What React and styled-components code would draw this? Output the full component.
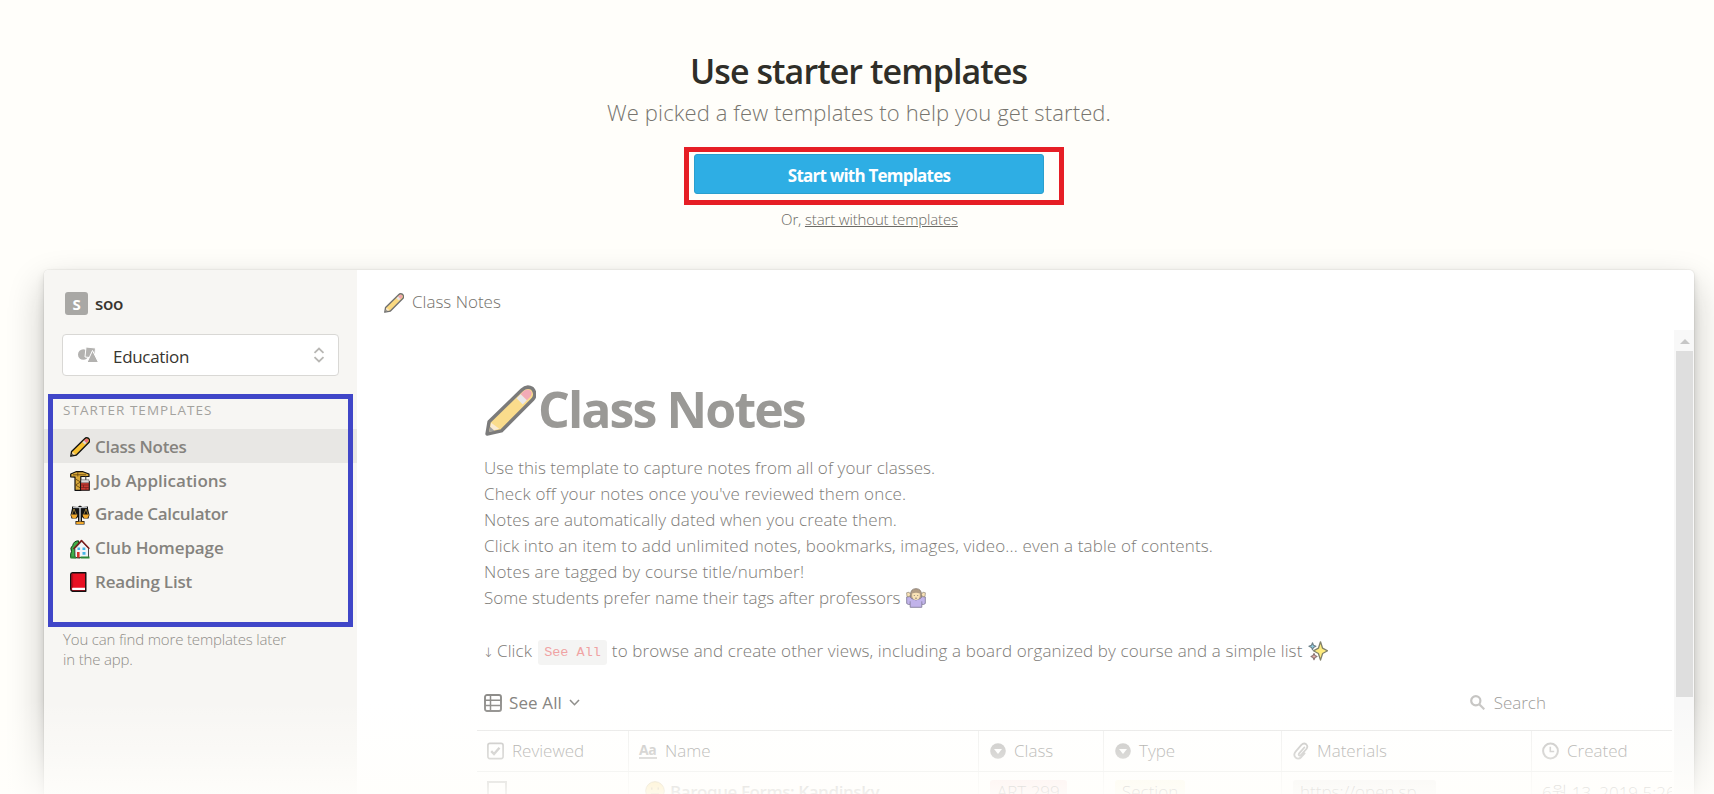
import { useState } from "react";
import styled, { createGlobalStyle } from "styled-components";

const GlobalStyle = createGlobalStyle`
* { box-sizing: border-box; }
body {
margin: 0;
background: #fffefa;
font-family: "Open Sans", "Noto Sans CJK KR", sans-serif;
color: #37352f;
}
`;

const Page = styled.div`
position: relative;
height: 794px;
overflow: hidden;
`;
const Hero = styled.header`
display: flex;
flex-direction: column;
align-items: center;
height: 270px;
padding-top: 48px;
`;
const HeroTitle = styled.h1`
margin: 0 0 3px 3px;
font-size: 34px;
line-height: 46px;
font-weight: 600;
letter-spacing: -0.93px;
color: #2f2e28;
`;
const HeroSub = styled.p`
margin: 0 0 20px 4px;
font-size: 22px;
line-height: 30px;
font-weight: 300;
letter-spacing: 0.12px;
color: #77756f;
`;
const RedBox = styled.div`
width: 380px;
height: 58px;
margin-left: 34px;
padding: 2px 15px 0 5px;
border: 5px solid #e61e25;
`;
const StartBtn = styled.button`
width: 100%;
height: 40px;
padding: 3px 0 0;
border: 1px solid #2a9fce;
border-radius: 3px;
background: #2eaee4;
color: #fff;
font-family: inherit;
font-size: 17px;
font-weight: 700;
letter-spacing: -0.78px;
cursor: pointer;
`;
const Skip = styled.div`
margin: 4px 0 0 25px;
font-size: 15px;
line-height: 20px;
font-weight: 300;
letter-spacing: -0.15px;
color: #6b6964;
`;
const SkipLink = styled.span`
text-decoration: underline;
cursor: pointer;
`;

const Card = styled.div`
display: flex;
width: 1650px;
height: 560px;
margin-left: 44px;
border-radius: 5px 5px 0 0;
background: #fff;
box-shadow: 0 0 0 1px rgba(15,15,15,0.04), 0 4px 8px rgba(15,15,15,0.12), 0 16px 36px rgba(15,15,15,0.24);
`;
const Sidebar = styled.aside`
width: 313px;
padding-top: 22px;
border-radius: 5px 0 0 0;
background: #f7f6f3;
`;
const Workspace = styled.div`
display: flex;
align-items: center;
gap: 7px;
height: 23px;
margin-left: 21px;
font-size: 17px;
font-weight: 600;
letter-spacing: -0.3px;
line-height: 21px;
`;
const Badge = styled.div`
width: 23px;
height: 23px;
border-radius: 3px;
background: #a9a8a5;
color: #fff;
font-size: 15px;
font-weight: 700;
line-height: 24px;
text-align: center;
`;
const Select = styled.div`
display: flex;
align-items: center;
height: 42px;
margin: 19px 18px 0;
padding: 0 13px 0 15px;
border: 1px solid #d9d8d5;
border-radius: 4px;
background: #fff;
`;
const SelectText = styled.span`
flex: 1;
padding: 2px 0 0 15px;
font-size: 17px;
letter-spacing: -0.3px;
`;
const Section = styled.section`
position: relative;
height: 233px;
margin-top: 18px;
padding-top: 6px;

&::after {
content: "";
position: absolute;
inset: 0 4px;
border: 5px solid #4046c8;
pointer-events: none;
}
`;
const Label = styled.div`
margin: 0 0 9px 19px;
font-size: 13.5px;
line-height: 20px;
letter-spacing: 1.05px;
color: #a3a29e;
`;
const Item = styled.div`
display: flex;
align-items: center;
gap: 5px;
height: 33.75px;
padding: 1px 0 0 26px;
background: ${props => props.$on ? "#e8e7e4" : "transparent"};
color: #85837e;
font-size: 17px;
font-weight: 600;
letter-spacing: ${props => props.$ls || -0.3}px;
cursor: pointer;

svg { margin-top: 2px; }
`;
const Foot = styled.p`
width: 230px;
margin: 2px 0 0 19px;
font-size: 15px;
line-height: 20px;
font-weight: 300;
letter-spacing: -0.16px;
color: #8f8d88;
`;

const Main = styled.main`
flex: 1;
min-width: 0;
display: flex;
flex-direction: column;
`;
const Crumb = styled.div`
display: flex;
align-items: center;
gap: 8px;
height: 60px;
padding: 3px 0 0 27px;
font-size: 17px;
font-weight: 300;
color: #73716c;

svg { opacity: 0.6; margin-top: 3px; }
`;
const Scroller = styled.div`
flex: 1;
display: flex;
min-height: 0;
overflow: hidden;
`;
const Content = styled.div`
flex: 1;
min-width: 0;
padding: 49px 2px 0 127px;
color: #7d7b77;
`;
const DocTitle = styled.h2`
display: flex;
align-items: center;
gap: 2px;
margin: 0 0 16px 1px;
font-size: 50px;
line-height: 60px;
font-weight: 700;
letter-spacing: -1.9px;
color: #9a9996;

svg { opacity: 0.55; margin-top: 2px; }
`;
const Para = styled.p`
margin: 0;
height: 26.1px;
font-size: 17px;
line-height: 26.1px;
font-weight: 300;
letter-spacing: ${props => props.$ls || 0.06}px;
white-space: pre;

svg { vertical-align: -4px; margin-left: 1px; opacity: 0.65; }
`;
const Code = styled.code`
position: relative;
top: -1px;
margin: 0 5px 0 6px;
padding: 5px 6px;
border-radius: 3px;
background: #f4f4f3;
color: #f0a3a3;
font-family: "Liberation Mono", monospace;
font-size: 13.5px;
letter-spacing: 0;
`;
const Arrow = styled.span`
display: inline-block;
width: 14px;
font-family: "DejaVu Sans", sans-serif;
font-size: 13px;
font-weight: 200;
letter-spacing: 0;
margin-left: -1px;
`;
const Toolbar = styled.div`
display: flex;
align-items: center;
height: 28px;
margin: 25px 126px 13px 0;
font-size: 17px;
`;
const View = styled.div`
flex: 1;
display: flex;
align-items: center;
gap: 7px;
letter-spacing: 0.12px;
color: #84827e;
`;
const Search = styled.div`
display: flex;
align-items: center;
gap: 9px;
font-weight: 300;
color: #9b9a97;
`;
const Row = styled.div`
display: grid;
grid-template-columns: 152px 350px 125px 178px 250px 1fr;
height: ${props => props.$head ? 42 : 40}px;
margin-left: -7px;
border-top: ${props => props.$head ? "1px solid #e6e6e5" : "none"};
border-bottom: 1px solid #e6e6e5;
font-size: 17px;
font-weight: 300;
color: ${props => props.$head ? "#92918e" : "#84827e"};
`;
const Cell = styled.div`
display: flex;
align-items: center;
gap: 8px;
padding-left: ${props => props.$pad || 11}px;
border-right: 1px solid #eeeeed;
white-space: nowrap;
overflow: hidden;

&:last-child { border-right: none; }
`;
const Aa = styled.span`
width: 18px;
border-bottom: 2px solid #c4c3c1;
color: #bdbcba;
font-size: 14px;
line-height: 14px;
font-weight: 700;
letter-spacing: -0.5px;
`;
const Box = styled.span`
width: 20px;
height: 20px;
border: 2px solid #b5b4b1;
`;
const Name = styled.b`
font-weight: 600;
letter-spacing: -0.43px;
color: #a3a29f;
margin-left: -3px;
`;
const Tag = styled.span`
height: 22px;
padding: 0 ${props => props.$px || 7}px;
border-radius: 3px;
background: ${props => props.$bg};
line-height: 23px;
`;
const Track = styled.div`
width: 20px;
padding: 9px 1px 0 2px;
background: #f8f8f8;
`;
const Up = styled.div`
width: 0;
margin: 0 auto 7px;
border: 5px solid transparent;
border-top: none;
border-bottom-color: #c6c6c6;
`;
const Thumb = styled.div`
height: 346px;
background: #dedede;
`;
const Fade = styled.div`
position: absolute;
left: 0;
right: 0;
bottom: 0;
height: 94px;
background: linear-gradient(rgba(255,254,251,0), rgba(255,254,251,0.4) 55%, rgba(255,254,251,0.86));
pointer-events: none;
`;

const Pencil = ({ size = 20 }) => (
    <svg width={size} height={size} viewBox="0 0 50 50">
        <path d="M2 48 L4 36 L36 5 Q41 0 46.500 3.500 Q51 9 47 14 L16 45 Z" fill="#f7c02f" stroke="#111" strokeWidth="3.4" strokeLinejoin="round" />
        <path d="M35 9 L38 6 Q42 3 45 6 Q47 9 44 12 L41 15 Z" fill="#e8677d" />
        <path d="M35 9 L41 15 L37 19 L31 13 Z" fill="#d8d5da" />
        <path d="M4.500 45.500 L6 37 L14 43 Z" fill="#f6dcb0" />
        <path d="M4 46 L5 41 L9.500 45 Z" fill="#555" />
    </svg>
);
const Crane = () => (
    <svg width="20" height="20" viewBox="0 0 20 20" strokeLinejoin="round">
        <path d="M.7 5.800V3L6 .7h7L19 3v2.500h-8.200v13.800H5V6.200z" fill="#d9a93a" stroke="#111" strokeWidth="1.200" />
        <path d="M5.500 8l5 3-5 3 5 3M3 3.800h13M7.800 1v4.500" fill="none" stroke="#6b4a12" strokeWidth=".9" />
        <path d="M15.800 5v4" stroke="#333" />
        <path d="M10.500 10.500h8.800v8.800h-8.800z" fill="#c93a32" stroke="#111" strokeWidth="1.100" />
        <path d="M11 8.800h8v3h-8z" fill="#dcdcdc" stroke="#444" strokeWidth=".5" />
        <path d="M11 14h8M11 16.500h8M13.500 14v2.500M16 16.500v2.300" stroke="#73201c" strokeWidth=".7" />
    </svg>
);
const Scale = () => (
    <svg width="20" height="20" viewBox="0 0 20 20" strokeLinejoin="round">
        <path d="M2 1.500L7.500 2 10 .5l2.500 1.500L18 1.500v2L19.500 10l-1 3.500h-5L12 12V16h2.500v3.500h-9V16H8v-4l-1.500 1.500h-5L.5 10 2 3.500z" fill="#111" />
        <path d="M9.200 2h1.600v14.500H9.200z" fill="#b9bec3" />
        <path d="M3 2.600h14" stroke="#c9ced2" strokeWidth="1" />
        <path d="M4 4L1.900 9.500M4 4l2.300 5.500M16 4l-2.300 5.500M16 4l2.100 5.500" stroke="#c7a24b" strokeWidth=".7" />
        <path d="M1 9.500h6.400q-.6 4-3.200 4t-3.200-4zM12.600 9.500H19q-.6 4-3.200 4t-3.200-4zM6.200 16.700h7.600v2.200H6.200z" fill="#f2a92c" />
    </svg>
);
const House = () => (
    <svg width="20" height="20" viewBox="0 0 20 20" strokeLinejoin="round">
        <path d="M.7 18.500Q.3 14 1.500 12.500-.3 8.500 2.700 6.500 3.500 2 8.500 1.800L10 19z" fill="#3fae49" stroke="#143d18" strokeWidth="1" />
        <path d="M4.800 9.500L12 2.200l6.500 7v9.300H5z" fill="#f4f5f7" stroke="#222" strokeWidth=".8" />
        <path d="M3.500 10L11.500 1.500 19.300 9.800" fill="none" stroke="#7b1c1c" strokeWidth="1.600" />
        <path d="M7 13h2.600v5.500H7z" fill="#d9342b" />
        <path d="M7.500 8.500h2.600V11H7.500zM12.500 8.500h2.800V11h-2.800zM12.500 13h3v2.800h-3z" fill="#45b6e6" />
        <path d="M.5 17.500h5.500V19.500H.5zM10.500 17.500h9v2h-9z" fill="#2d8a36" />
    </svg>
);
const Book = () => (
    <svg width="20" height="20" viewBox="0 0 20 20" strokeLinejoin="round">
        <path d="M2.500.7h13.300v18.600H2.500Q.7 19 .7 17V2.500Q.7.9 2.500.7z" fill="#e81123" stroke="#111" strokeWidth="1.400" />
        <path d="M2.500 15.800H15v2.200H2.500q-1.200-1 0-2.200z" fill="#fff" />
        <path d="M2.600 1.500v13.800" stroke="#a80d1a" strokeWidth=".8" />
    </svg>
);
const Shrug = () => (
    <svg width="20" height="20" viewBox="0 0 20 20" strokeLinejoin="round">
        <path d="M4.500 7Q4.500.7 10 .7T15.500 7v4h-11z" fill="#8a6a45" stroke="#4c3b2a" strokeWidth=".9" />
        <path d="M5.500 10.500L3.800 8.500.7 9v6.500q1.600 1.500 3.500.8v3h11.600v-3q1.900.7 3.500-.8V9l-3.100-.5-1.700 2q-4.500 3-9 0z" fill="#a08be0" stroke="#443b66" strokeWidth=".9" />
        <path d="M4.200 16.300v-3M15.800 16.300v-3" stroke="#443b66" strokeWidth=".8" />
        <path d="M6.200 5.500Q10 4 13.800 5.500q.8 6-3.800 6.500Q5.400 11.500 6.200 5.500z" fill="#f7d390" />
        <path d="M.6 4.800l2.500-.6 1.400 2.300-1 2.200L1 8.500zM19.400 4.800l-2.500-.6-1.400 2.300 1 2.200 2.500-.2z" fill="#f7d390" stroke="#5a4a33" strokeWidth=".7" />
        <path d="M8.300 7v1M11.700 7v1M9 10.200h2" stroke="#4c3b2a" strokeWidth=".9" />
    </svg>
);
const Sparkles = () => (
    <svg width="20" height="20" viewBox="0 0 20 20" strokeLinejoin="round">
        <path d="M12.500 .8l2.100 6.400L19.600 9.800l-5 2.700-2.100 6.600-2.100-6.600-5-2.700 5-2.600z" fill="#ffe338" stroke="#40401c" strokeWidth="1.300" />
        <path d="M4.500 1.800l1 2.400 2.400 1.100-2.400 1.100-1 2.400-1-2.400L.9 5.300l2.600-1.100z" fill="#58b7d8" stroke="#24404b" strokeWidth="1.100" />
        <path d="M6 12.500l1 2 2 1-2 1-1 2.200-1-2.200-2-1 2-1z" fill="#e48b86" stroke="#4d2c2a" strokeWidth="1.100" />
    </svg>
);
const Shapes = () => (
    <svg width="20" height="16" viewBox="0 0 20 16" fill="#b3b2b0">
        <circle cx="5.300" cy="7.500" r="5.300" />
        <path d="M8 0l9.500 1-1 10L7 10z" stroke="#fff" strokeWidth="1" />
        <path d="M14.500 3.500L20.500 15.500H9z" stroke="#fff" strokeWidth="1" />
    </svg>
);
const UpDown = () => (
    <svg width="12" height="16" viewBox="0 0 12 16" fill="none" stroke="#b8b7b4" strokeWidth="1.800">
        <path d="M1.500 5.800L6 1.500l4.500 4.300M1.500 10.200L6 14.500l4.500-4.300" />
    </svg>
);
const TableIcon = () => (
    <svg width="18" height="18" viewBox="0 0 18 18" fill="none" stroke="#8e8d8a">
        <rect x="1" y="1" width="16" height="16" rx="2" strokeWidth="1.900" />
        <path d="M1 6.300h16M1 11.600h16M6.500 1v16" strokeWidth="1.500" />
    </svg>
);
const Chevron = () => (
    <svg width="11" height="8" viewBox="0 0 11 8" fill="none" stroke="#8e8d8a" strokeWidth="1.600">
        <path d="M1 1l4.500 4.700L10 1" />
    </svg>
);
const Glass = () => (
    <svg width="15" height="15" viewBox="0 0 15 15" fill="none" stroke="#c6c5c3" strokeWidth="2.200">
        <circle cx="5.800" cy="5.800" r="4.600" />
        <path d="M9 9l5.300 5.300" />
    </svg>
);
const Check = () => (
    <svg width="17" height="18" viewBox="0 0 17 18" fill="none" stroke="#bdbcba">
        <rect x=".9" y="1.400" width="15.200" height="15.200" rx="2" strokeWidth="1.600" />
        <path d="M4.200 9.200l2.800 2.800 5.500-6.200" strokeWidth="2.400" />
    </svg>
);
const Down = () => (
    <svg width="16" height="16" viewBox="0 0 16 16">
        <circle cx="8" cy="8" r="7.800" fill="#bdbcba" />
        <path d="M4 6h8l-4 5z" fill="#fff" />
    </svg>
);
const Clip = () => (
    <svg width="16" height="18" viewBox="0 0 16 18" fill="none" stroke="#bdbcba" strokeWidth="1.800" strokeLinecap="round">
        <path d="M11.300 5.500L6 11.600q-.8 1.500.4 2 .9.300 1.800-.7l5.200-5.900q2-2.700-.2-4.700-2.400-1.900-4.800.6L2.600 9.600q-2.600 3.300-.1 5.900 3 2.400 5.900-.5l3.200-3.500" />
    </svg>
);
const Clock = () => (
    <svg width="17" height="18" viewBox="0 0 17 18" fill="none" stroke="#bdbcba" strokeWidth="2">
        <circle cx="8.500" cy="9" r="7.400" />
        <path d="M8.300 4.800v4.700h3.900" strokeWidth="1.600" />
    </svg>
);
const Face = () => (
    <svg width="20" height="20" viewBox="0 0 20 20">
        <circle cx="10" cy="10" r="9.300" fill="#fbdd88" stroke="#c9b37c" strokeWidth="1" />
        <path d="M6.800 6.500v2.200M13.200 6.500v2.200M6 13h8" stroke="#a78f5c" strokeWidth="1.200" />
    </svg>
);

const templates = [
    { name: "Class Notes", icon: <Pencil />, ls: -0.3 },
    { name: "Job Applications", icon: <Crane />, ls: 0.02 },
    { name: "Grade Calculator", icon: <Scale />, ls: -0.33 },
    { name: "Club Homepage", icon: <House />, ls: -0.12 },
    { name: "Reading List", icon: <Book />, ls: -0.2 },
];

export default function App() {
const [selected, setSelected] = useState(0);

return (
    <Page>
        <GlobalStyle />
        <Hero>
            <HeroTitle>Use starter templates</HeroTitle>
            <HeroSub>We picked a few templates to help you get started.</HeroSub>
            <RedBox>
                <StartBtn type="button">Start with Templates</StartBtn>
            </RedBox>
            <Skip>Or, <SkipLink>start without templates</SkipLink></Skip>
        </Hero>
        <Card>
            <Sidebar>
                <Workspace><Badge>S</Badge>soo</Workspace>
                <Select>
                    <Shapes />
                    <SelectText>Education</SelectText>
                    <UpDown />
                </Select>
                <Section>
                    <Label>STARTER TEMPLATES</Label>
                    {templates.map((t, i) => (
                        <Item key={t.name} $on={selected === i} $ls={t.ls} onClick={() => setSelected(i)}>
                            {t.icon}{t.name}
                        </Item>
                    ))}
                </Section>
                <Foot>You can find more templates later in the app.</Foot>
            </Sidebar>
            <Main>
                <Crumb><Pencil />Class Notes</Crumb>
                <Scroller>
                    <Content>
                        <DocTitle><Pencil size={51} />Class Notes</DocTitle>
                        <Para>Use this template to capture notes from all of your classes.</Para>
                        <Para $ls={0.14}>Check off your notes once you've reviewed them once.</Para>
                        <Para $ls={0.1}>Notes are automatically dated when you create them.</Para>
                        <Para $ls={0.141}>Click into an item to add unlimited notes, bookmarks, images, video... even a table of contents.</Para>
                        <Para $ls={0.17}>Notes are tagged by course title/number!</Para>
                        <Para $ls={0.01}>Some students prefer name their tags after professors <Shrug /></Para>
                        <Para />
                        <Para $ls={0.115}><Arrow>↓</Arrow>Click<Code>See All</Code>to browse and create other views, including a board organized by course and a simple list <Sparkles /></Para>
                        <Toolbar>
                            <View><TableIcon />See All<Chevron /></View>
                            <Search><Glass />Search</Search>
                        </Toolbar>
                        <Row $head>
                            <Cell $pad={10}><Check />Reviewed</Cell>
                            <Cell $pad={10}><Aa>Aa</Aa>Name</Cell>
                            <Cell><Down />Class</Cell>
                            <Cell><Down />Type</Cell>
                            <Cell><Clip />Materials</Cell>
                            <Cell $pad={10}><Clock />Created</Cell>
                        </Row>
                        <Row>
                            <Cell $pad={10}><Box /></Cell>
                            <Cell $pad={16}><Face /><Name>Baroque Forms: Kandinsky</Name></Cell>
                            <Cell><Tag $bg="#fbe4e4">ART 299</Tag></Cell>
                            <Cell><Tag $bg="#fbf8e4">Section</Tag></Cell>
                            <Cell><Tag $bg="#f1f0ee">https://open.sp...</Tag></Cell>
                            <Cell $pad={10}>6월 13, 2019 5:26</Cell>
                        </Row>
                    </Content>
                    <Track>
                        <Up />
                        <Thumb />
                    </Track>
                </Scroller>
            </Main>
        </Card>
        <Fade />
    </Page>
);
}
